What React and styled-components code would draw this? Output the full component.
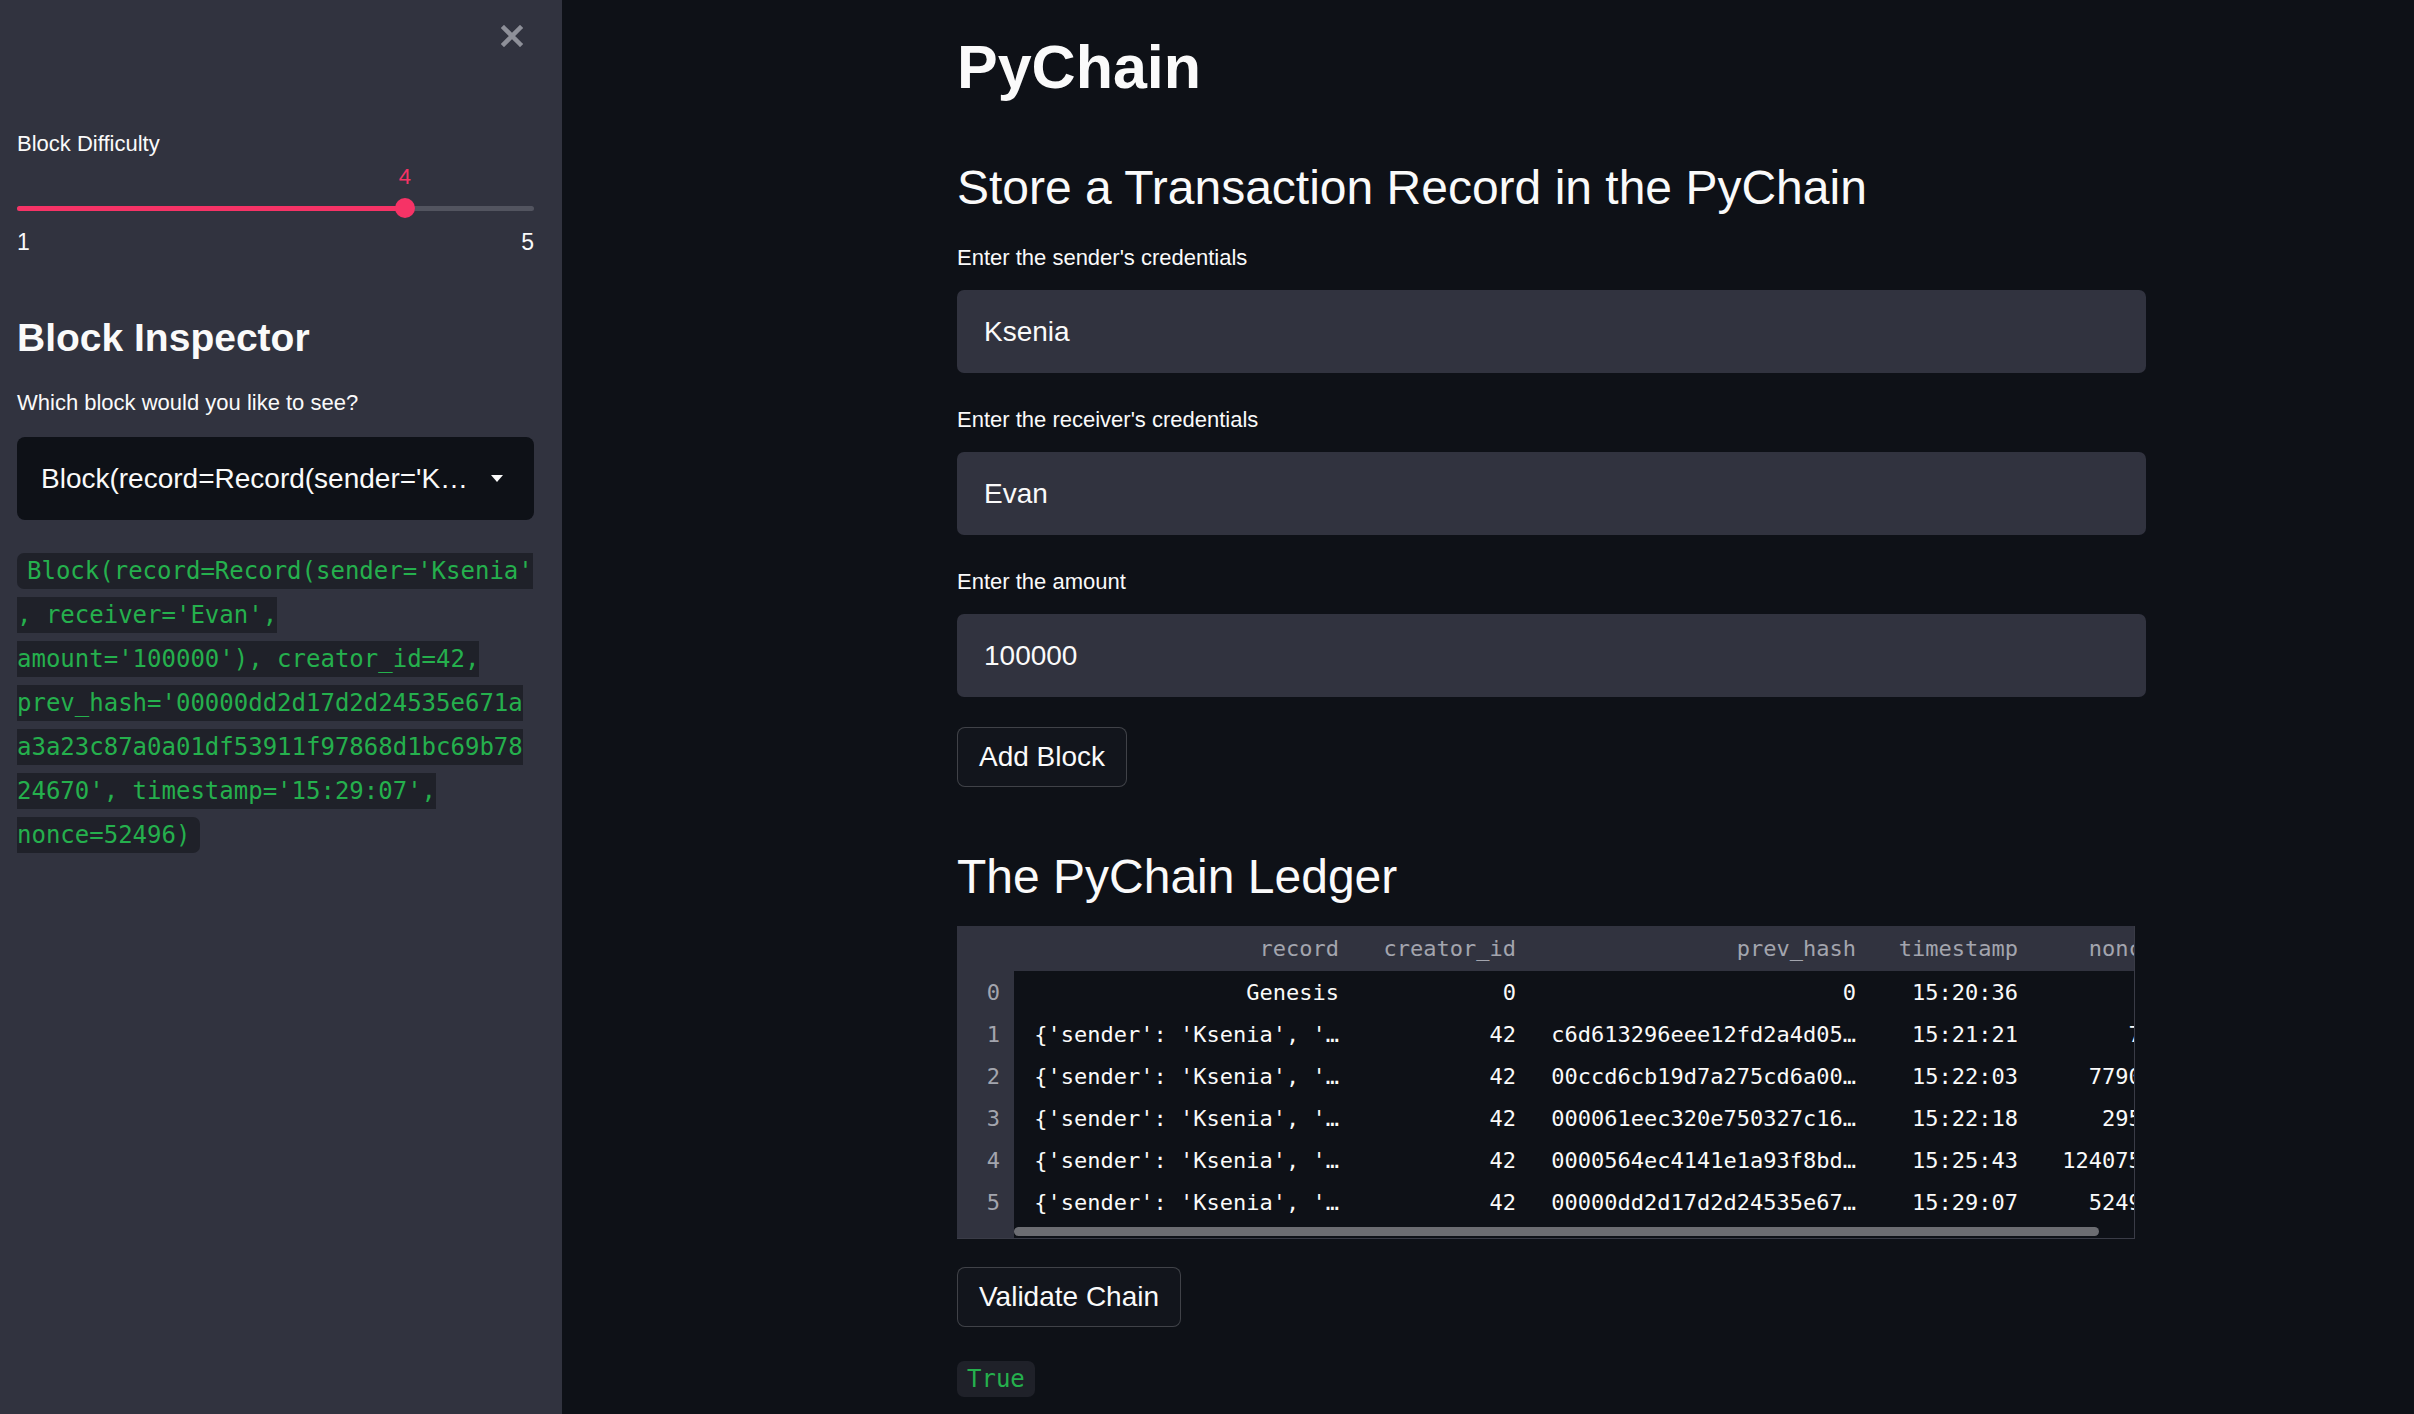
import React from "react";
import styled, { createGlobalStyle } from "styled-components";

const GlobalStyle = createGlobalStyle`
  html, body { margin: 0; padding: 0; background: #0e1117; }
  body { font-family: "Liberation Sans", Arial, sans-serif; color: #fafafa; }
  * { box-sizing: border-box; }
`;

const Layout = styled.div`
  display: flex;
  width: 100%;
  height: 1414px;
  overflow: hidden;
`;

/* ---------- sidebar ---------- */
const Sidebar = styled.aside`
  flex: 0 0 562px;
  background: #31333f;
  padding: 0 28px 0 17px;
  display: flex;
  flex-direction: column;
`;

const CloseRow = styled.div`
  height: 72px;
  display: flex;
  align-items: center;
  justify-content: flex-end;
  padding-right: 11px;
`;

const CloseButton = styled.button`
  width: 22px;
  height: 22px;
  padding: 0;
  border: 0;
  background: none;
  display: flex;
  cursor: pointer;
`;

const WidgetLabel = styled.label`
  display: block;
  font-size: 22px;
  line-height: 28px;
  color: #fafafa;
  margin-top: ${(p) => p.$mt || 0}px;
`;

const SliderBox = styled.div`
  position: relative;
  height: 62px;
`;

const Track = styled.div`
  position: absolute;
  left: 0;
  right: 0;
  top: 47.5px;
  height: 5px;
  border-radius: 3px;
  background: #52545f;
`;

const TrackFill = styled.div`
  position: absolute;
  left: 0;
  top: 0;
  bottom: 0;
  border-radius: 3px;
  background: #f63366;
`;

const Thumb = styled.div`
  position: absolute;
  top: 50%;
  width: 20px;
  height: 20px;
  border-radius: 50%;
  background: #f63366;
  transform: translate(-50%, -50%);
`;

const ThumbValue = styled.div`
  position: absolute;
  left: 50%;
  bottom: calc(100% + 8px);
  transform: translateX(-50%);
  font-size: 22px;
  line-height: 26px;
  color: #f63366;
`;

const TickRow = styled.div`
  margin-top: 8px;
  display: flex;
  justify-content: space-between;
  font-size: 23px;
  line-height: 28px;
  color: #fafafa;
`;

const SideHeading = styled.h2`
  margin: 58px 0 0;
  font-size: 39px;
  line-height: 48px;
  font-weight: 700;
  color: #fafafa;
`;

const SelectBox = styled.div`
  margin-top: 20px;
  height: 83px;
  background: #0e1117;
  border-radius: 8px;
  display: flex;
  align-items: center;
  justify-content: space-between;
  padding: 0 31px 0 24px;
`;

const SelectValue = styled.span`
  width: 430px;
  font-size: 28px;
  white-space: nowrap;
  overflow: hidden;
  text-overflow: ellipsis;
  color: #fafafa;
`;

const CodeText = styled.p`
  margin: ${(p) => p.$mt || 0}px 0 0;
  font-family: "DejaVu Sans Mono", monospace;
  font-size: 24px;
  line-height: 44px;
`;

const InlineCode = styled.code`
  font-family: "DejaVu Sans Mono", monospace;
  background: #1f2129;
  color: #25b04d;
  padding: 4px 10px;
  border-radius: 7px;
`;

/* ---------- main ---------- */
const Main = styled.main`
  flex: 1;
  padding: 31px 268px 0 395px;
  display: flex;
  flex-direction: column;
  align-items: flex-start;
`;

const Title = styled.h1`
  margin: 0;
  font-size: 61px;
  line-height: 72px;
  font-weight: 700;
  color: #fafafa;
`;

const SectionTitle = styled.h2`
  margin: ${(p) => p.$mt}px 0 0;
  font-size: 48px;
  line-height: 56px;
  font-weight: 400;
  color: #fafafa;
`;

const Field = styled.div`
  width: 100%;
  margin-top: ${(p) => p.$mt}px;
  display: flex;
  flex-direction: column;
  gap: 18px;
`;

const TextInput = styled.input`
  width: 100%;
  height: 83px;
  border: 0;
  outline: none;
  border-radius: 7px;
  background: #31333f;
  color: #fafafa;
  padding: 0 27px;
  font-family: "Liberation Sans", Arial, sans-serif;
  font-size: 28px;
`;

const Button = styled.button`
  margin-top: ${(p) => p.$mt}px;
  height: 60px;
  padding: 0 21px;
  border: 1px solid rgba(250, 250, 250, 0.2);
  border-radius: 8px;
  background: #12151c;
  color: #fafafa;
  font-family: "Liberation Sans", Arial, sans-serif;
  font-size: 28px;
  cursor: pointer;
`;

const TableWrap = styled.div`
  margin-top: 21px;
  width: 1178px;
  overflow: hidden;
  background: #0e1117;
  border-right: 1px solid #3a3c47;
  border-bottom: 1px solid #3a3c47;
  font-family: "DejaVu Sans Mono", monospace;
  font-size: 22px;
`;

const COLS = "57px 343px 177px 340px 162px 137px";

const Row = styled.div`
  display: grid;
  grid-template-columns: ${COLS};
  height: ${(p) => (p.$header ? 45 : 42)}px;
  background: ${(p) => (p.$header ? "#31333f" : "#0e1117")};
`;

const Cell = styled.div`
  display: flex;
  align-items: center;
  justify-content: flex-end;
  padding: 0 18px;
  white-space: nowrap;
  overflow: hidden;
  color: ${(p) => (p.$header ? "#a3a5ae" : "#fafafa")};
`;

const IndexCell = styled.div`
  display: flex;
  align-items: center;
  justify-content: flex-end;
  padding-right: 14px;
  background: #31333f;
  color: #a3a5ae;
`;

const ScrollRow = styled.div`
  display: grid;
  grid-template-columns: 57px 1fr;
  height: 15px;
`;

const ScrollGutter = styled.div`
  background: #31333f;
`;

const ScrollTrack = styled.div`
  padding-top: 4px;
`;

const ScrollThumb = styled.div`
  width: 1085px;
  height: 9px;
  border-radius: 5px;
  background: #6c6d72;
`;

const rows = [
  ["Genesis", "0", "0", "15:20:36", "0"],
  ["{'sender': 'Ksenia', '…", "42", "c6d613296eee12fd2a4d05…", "15:21:21", "75"],
  ["{'sender': 'Ksenia', '…", "42", "00ccd6cb19d7a275cd6a00…", "15:22:03", "77903"],
  ["{'sender': 'Ksenia', '…", "42", "000061eec320e750327c16…", "15:22:18", "2957"],
  ["{'sender': 'Ksenia', '…", "42", "0000564ec4141e1a93f8bd…", "15:25:43", "1240756"],
  ["{'sender': 'Ksenia', '…", "42", "00000dd2d17d2d24535e67…", "15:29:07", "52496"],
];

const headers = ["record", "creator_id", "prev_hash", "timestamp", "nonce"];

const blockLines = [
  "Block(record=Record(sender='Ksenia'",
  ", receiver='Evan',",
  "amount='100000'), creator_id=42,",
  "prev_hash='00000dd2d17d2d24535e671a",
  "a3a23c87a0a01df53911f97868d1bc69b78",
  "24670', timestamp='15:29:07',",
  "nonce=52496)",
];

function Slider({ label, min, max, value }) {
  const pct = ((value - min) / (max - min)) * 100;
  return (
    <>
      <WidgetLabel $mt={58}>{label}</WidgetLabel>
      <SliderBox>
        <Track>
          <TrackFill style={{ width: `${pct}%` }} />
          <Thumb style={{ left: `${pct}%` }}>
            <ThumbValue>{value}</ThumbValue>
          </Thumb>
        </Track>
      </SliderBox>
      <TickRow>
        <span>{min}</span>
        <span>{max}</span>
      </TickRow>
    </>
  );
}

export default function App() {
  return (
    <>
      <GlobalStyle />
      <Layout>
        <Sidebar>
          <CloseRow>
            <CloseButton aria-label="Close sidebar">
              <svg width="22" height="22" viewBox="0 0 22 22">
                <path d="M3 3 L19 19 M19 3 L3 19" stroke="#8e9099" strokeWidth="4.5" strokeLinecap="square" />
              </svg>
            </CloseButton>
          </CloseRow>
          <Slider label="Block Difficulty" min={1} max={5} value={4} />
          <SideHeading>Block Inspector</SideHeading>
          <WidgetLabel $mt={27}>Which block would you like to see?</WidgetLabel>
          <SelectBox>
            <SelectValue>
              Block(record=Record(sender='Ksenia', receiver='Evan', amount='100000'), creator_id=42, prev_hash='00000dd2d17d2d24535e671aa3a23c87a0a01df53911f97868d1bc69b7824670', timestamp='15:29:07', nonce=52496)
            </SelectValue>
            <svg width="12" height="7" viewBox="0 0 12 7">
              <path d="M0 0 H12 L6 7 Z" fill="#fafafa" />
            </svg>
          </SelectBox>
          <CodeText $mt={29}>
            <InlineCode>
              {blockLines.map((l, i) => (
                <React.Fragment key={i}>
                  {l}
                  {i < blockLines.length - 1 && <br />}
                </React.Fragment>
              ))}
            </InlineCode>
          </CodeText>
        </Sidebar>

        <Main>
          <Title>PyChain</Title>
          <SectionTitle $mt={57}>Store a Transaction Record in the PyChain</SectionTitle>
          <Field $mt={28}>
            <WidgetLabel>Enter the sender's credentials</WidgetLabel>
            <TextInput defaultValue="Ksenia" />
          </Field>
          <Field $mt={33}>
            <WidgetLabel>Enter the receiver's credentials</WidgetLabel>
            <TextInput defaultValue="Evan" />
          </Field>
          <Field $mt={33}>
            <WidgetLabel>Enter the amount</WidgetLabel>
            <TextInput defaultValue="100000" />
          </Field>
          <Button $mt={30}>Add Block</Button>

          <SectionTitle $mt={62}>The PyChain Ledger</SectionTitle>
          <TableWrap>
            <Row $header>
              <IndexCell />
              {headers.map((h) => (
                <Cell key={h} $header>{h}</Cell>
              ))}
            </Row>
            {rows.map((r, i) => (
              <Row key={i}>
                <IndexCell>{i}</IndexCell>
                {r.map((v, j) => (
                  <Cell key={j}>{v}</Cell>
                ))}
              </Row>
            ))}
            <ScrollRow>
              <ScrollGutter />
              <ScrollTrack>
                <ScrollThumb />
              </ScrollTrack>
            </ScrollRow>
          </TableWrap>

          <Button $mt={28}>Validate Chain</Button>
          <CodeText $mt={30}>
            <InlineCode>True</InlineCode>
          </CodeText>
        </Main>
      </Layout>
    </>
  );
}
